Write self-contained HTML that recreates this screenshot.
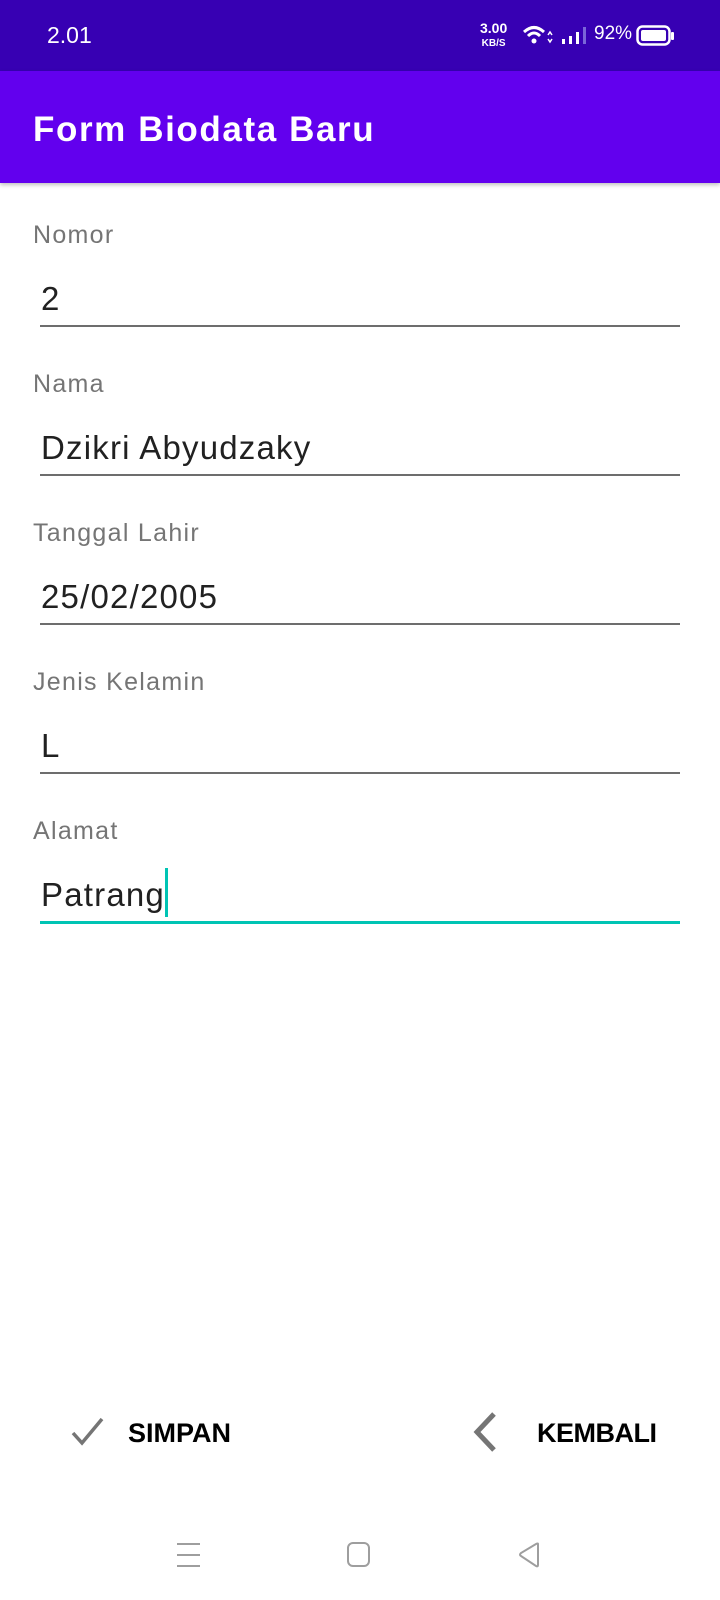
<!DOCTYPE html>
<html><head><meta charset="utf-8"><style>
*{margin:0;padding:0;box-sizing:border-box}
body{width:720px;height:1600px;background:#fff;font-family:"Liberation Sans",Roboto,sans-serif;position:relative;overflow:hidden}
.a{position:absolute;white-space:nowrap}
.lbl{font-size:25px;color:#757575;left:33px;letter-spacing:1.3px}
.val{font-size:33px;color:#212121;left:41px;letter-spacing:1.2px}
.ln{position:absolute;left:40px;width:640px;height:2px;background:#6d6d6d}
</style></head><body>
<div class="a" style="left:0;top:0;width:720px;height:71px;background:#3700B3"></div>
<div class="a" style="left:47px;top:22px;font-size:23px;color:#fff">2.01</div>
<div class="a" style="left:480px;top:22px;font-size:14px;font-weight:bold;color:#fff;line-height:13px;text-align:center">3.00<br><span style="font-size:10px">KB/S</span></div>
<svg class="a" style="left:522px;top:24px" width="34" height="24" viewBox="0 0 34 24"><path d="M2 8 Q12 -1 22 8" stroke="#fff" stroke-width="3" fill="none"/><path d="M6 12 Q12 6 18 12" stroke="#fff" stroke-width="3" fill="none"/><circle cx="12" cy="17" r="2.5" fill="#fff"/><path d="M26 11 l2 -3 l2 3 M26 15 l2 3 l2 -3" stroke="#fff" stroke-width="1.5" fill="none"/></svg>
<svg class="a" style="left:561px;top:26px" width="26" height="20"><rect x="1" y="13" width="3" height="5" fill="#fff"/><rect x="8" y="10" width="3" height="8" fill="#fff"/><rect x="15" y="6" width="3" height="12" fill="#fff"/><rect x="22" y="1" width="3" height="17" fill="#7a66d8"/></svg>
<div class="a" style="left:594px;top:23px;font-size:19px;color:#fff">92%</div>
<svg class="a" style="left:636px;top:25px" width="40" height="22"><rect x="1.5" y="1.5" width="32" height="18" rx="5" stroke="#fff" stroke-width="2.5" fill="none"/><rect x="5" y="5" width="25" height="11" rx="2" fill="#fff"/><rect x="35" y="7" width="3" height="8" rx="1" fill="#fff"/></svg>
<div class="a" style="left:0;top:71px;width:720px;height:112px;background:#6200EE;box-shadow:0 2px 4px rgba(0,0,0,.25)"></div>
<div class="a" style="left:33px;top:110px;font-size:35px;font-weight:bold;color:#fff;letter-spacing:1.6px">Form Biodata Baru</div>

<div class="a lbl" style="top:221px">Nomor</div>
<div class="a val" style="top:280px">2</div>
<div class="ln" style="top:325px"></div>
<div class="a lbl" style="top:370px">Nama</div>
<div class="a val" style="top:429px">Dzikri Abyudzaky</div>
<div class="ln" style="top:474px"></div>
<div class="a lbl" style="top:519px">Tanggal Lahir</div>
<div class="a val" style="top:578px">25/02/2005</div>
<div class="ln" style="top:623px"></div>
<div class="a lbl" style="top:668px">Jenis Kelamin</div>
<div class="a val" style="top:727px">L</div>
<div class="ln" style="top:772px"></div>
<div class="a lbl" style="top:817px">Alamat</div>
<div class="a val" style="top:876px">Patrang</div>
<div class="a" style="left:165px;top:868px;width:3px;height:49px;background:#00C4B4"></div>
<div class="ln" style="top:921px;height:3px;background:#00C4B4"></div>

<svg class="a" style="left:70px;top:1416px" width="36" height="32"><path d="M3 17 L12 27 L32 3" stroke="#757575" stroke-width="3.5" fill="none"/></svg>
<div class="a" style="left:128px;top:1418px;font-size:27px;font-weight:bold;color:#000">SIMPAN</div>
<svg class="a" style="left:470px;top:1411px" width="32" height="42"><path d="M24 3 L7 21 L24 39" stroke="#757575" stroke-width="5" fill="none"/></svg>
<div class="a" style="left:537px;top:1418px;font-size:27px;font-weight:bold;color:#000;letter-spacing:-0.5px">KEMBALI</div>

<svg class="a" style="left:176px;top:1542px" width="24" height="26"><path d="M1 2H24M1 13H24M1 24H24" stroke="#9e9e9e" stroke-width="2"/></svg>
<svg class="a" style="left:347px;top:1542px" width="24" height="26"><rect x="1" y="1" width="21" height="23" rx="5" stroke="#9e9e9e" stroke-width="2" fill="none"/></svg>
<svg class="a" style="left:518px;top:1542px" width="24" height="26"><path d="M20 2 L20 23 Q20 25 18 24 L3 14 Q1 13 3 11 L18 2 Q20 1 20 2Z" stroke="#9e9e9e" stroke-width="2" fill="none"/></svg>
</body></html>
